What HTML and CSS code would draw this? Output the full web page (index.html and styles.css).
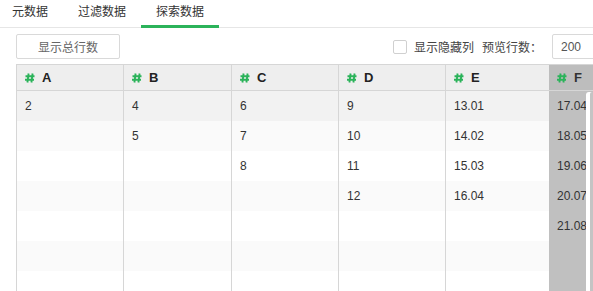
FILE: index.html
```html
<!DOCTYPE html>
<html lang="zh">
<head>
<meta charset="utf-8">
<link rel="stylesheet" href="styles.css">
</head>
<body>
<div class="app">
  <div class="tabs">
    <div class="tab first">元数据</div>
    <div class="tab">过滤数据</div>
    <div class="tab active">探索数据</div>
  </div>
  <div class="toolbar">
    <button class="btn">显示总行数</button>
    <div class="right">
      <label class="check"><span class="box"></span>显示隐藏列</label>
      <span class="label">预览行数：</span>
      <input class="num" value="200">
    </div>
  </div>
  <div class="table">
    <div class="row head">
      <div class="cell c1"><svg class="hash" viewBox="0 0 10 10"><path d="M3.6 0.5 L2.4 9.5 M7.6 0.5 L6.4 9.5 M0.5 3.3 H9.5 M0 6.8 H9" /></svg>A</div>
      <div class="cell c2"><svg class="hash" viewBox="0 0 10 10"><path d="M3.6 0.5 L2.4 9.5 M7.6 0.5 L6.4 9.5 M0.5 3.3 H9.5 M0 6.8 H9" /></svg>B</div>
      <div class="cell c3"><svg class="hash" viewBox="0 0 10 10"><path d="M3.6 0.5 L2.4 9.5 M7.6 0.5 L6.4 9.5 M0.5 3.3 H9.5 M0 6.8 H9" /></svg>C</div>
      <div class="cell c4"><svg class="hash" viewBox="0 0 10 10"><path d="M3.6 0.5 L2.4 9.5 M7.6 0.5 L6.4 9.5 M0.5 3.3 H9.5 M0 6.8 H9" /></svg>D</div>
      <div class="cell c5"><svg class="hash" viewBox="0 0 10 10"><path d="M3.6 0.5 L2.4 9.5 M7.6 0.5 L6.4 9.5 M0.5 3.3 H9.5 M0 6.8 H9" /></svg>E</div>
      <div class="cell c6 sel"><svg class="hash" viewBox="0 0 10 10"><path d="M3.6 0.5 L2.4 9.5 M7.6 0.5 L6.4 9.5 M0.5 3.3 H9.5 M0 6.8 H9" /></svg>F</div>
    </div>
    <div class="row hover">
      <div class="cell c1">2</div><div class="cell c2">4</div><div class="cell c3">6</div><div class="cell c4">9</div><div class="cell c5">13.01</div><div class="cell c6 sel">17.04</div>
    </div>
    <div class="row even">
      <div class="cell c1"></div><div class="cell c2">5</div><div class="cell c3">7</div><div class="cell c4">10</div><div class="cell c5">14.02</div><div class="cell c6 sel">18.05</div>
    </div>
    <div class="row">
      <div class="cell c1"></div><div class="cell c2"></div><div class="cell c3">8</div><div class="cell c4">11</div><div class="cell c5">15.03</div><div class="cell c6 sel">19.06</div>
    </div>
    <div class="row even">
      <div class="cell c1"></div><div class="cell c2"></div><div class="cell c3"></div><div class="cell c4">12</div><div class="cell c5">16.04</div><div class="cell c6 sel">20.07</div>
    </div>
    <div class="row">
      <div class="cell c1"></div><div class="cell c2"></div><div class="cell c3"></div><div class="cell c4"></div><div class="cell c5"></div><div class="cell c6 sel">21.08</div>
    </div>
    <div class="row even">
      <div class="cell c1"></div><div class="cell c2"></div><div class="cell c3"></div><div class="cell c4"></div><div class="cell c5"></div><div class="cell c6 sel"></div>
    </div>
    <div class="row last">
      <div class="cell c1"></div><div class="cell c2"></div><div class="cell c3"></div><div class="cell c4"></div><div class="cell c5"></div><div class="cell c6 sel"></div>
    </div>
  </div>
  <div class="scroll"><div class="thumb"></div></div>
</div>
</body>
</html>
```
FILE: styles.css
```css
html, body {
  margin: 0;
  padding: 0;
  overflow: hidden;
  background: #fff;
}
body {
  width: 593px;
  height: 291px;
  font-family: "Liberation Sans", "Noto Sans CJK SC", sans-serif;
  font-size: 12px;
  color: #333;
}
.app {
  position: relative;
  width: 593px;
  height: 291px;
  overflow: hidden;
}
.tabs {
  display: flex;
  height: 27px;
  border-bottom: 1px solid #e6e6e6;
}
.tab {
  position: relative;
  padding: 0 15px;
  line-height: 24px;
  height: 27px;
  color: #333;
}
.tab.first {
  padding-left: 12px;
}
.tab.active::after {
  content: "";
  position: absolute;
  left: 0;
  right: 0;
  bottom: -1px;
  height: 3px;
  background: #2bb35a;
}
.toolbar {
  box-sizing: border-box;
  width: 648px;
  display: flex;
  align-items: center;
  margin-top: 6px;
  padding: 0 16px;
  height: 25px;
}
.btn {
  width: 104px;
  height: 25px;
  margin: 0;
  padding: 0;
  border: 1px solid #d9d9d9;
  border-radius: 2px;
  background: #fff;
  color: #666;
  font-family: inherit;
  font-size: 12px;
}
.right {
  margin-left: auto;
  display: flex;
  align-items: center;
}
.check {
  display: flex;
  align-items: center;
  color: #444;
}
.box {
  width: 12px;
  height: 12px;
  border: 1px solid #d0d0d0;
  border-radius: 2px;
  margin-right: 7px;
  background: #fff;
}
.label {
  margin-left: 8px;
  margin-right: 10px;
  color: #444;
}
.num {
  box-sizing: border-box;
  width: 80px;
  height: 25px;
  margin: 0;
  padding: 0 8px;
  border: 1px solid #d9d9d9;
  border-radius: 2px;
  font-family: inherit;
  font-size: 12px;
  color: #555;
}
.table {
  margin-top: 5px;
  margin-left: 16px;
  width: 632px;
}
.row {
  display: flex;
  height: 30px;
  background: #fff;
}
.row.last {
  height: 20px;
}
.row.even {
  background: #fafafa;
}
.row.hover {
  background: #f2f2f2;
}
.row.head {
  box-sizing: border-box;
  height: 27px;
  border-top: 1px solid #d6d6d6;
  border-bottom: 1px solid #d6d6d6;
  background: #eeeeee;
  font-weight: bold;
  font-size: 13px;
  color: #222;
}
.cell {
  box-sizing: border-box;
  flex: none;
  display: flex;
  align-items: center;
  padding-left: 8px;
  border-left: 1px solid #d6d6d6;
  white-space: nowrap;
  overflow: hidden;
}
.row.last .cell {
  align-items: flex-start;
}
.c1 { width: 107px; }
.c2 { width: 108px; }
.c3 { width: 107px; }
.c4 { width: 107px; }
.c5 { width: 104px; }
.c6 { width: 99px; border-left: none; }
.cell.sel {
  background: #c0c0c0;
  color: #333;
  padding-left: 8px;
}
.head .cell.sel {
  background: #bdbdbd;
}
.hash {
  width: 10px;
  height: 10px;
  margin-right: 7px;
  flex: none;
}
.hash path {
  fill: none;
  stroke: #2bb35a;
  stroke-width: 1.9;
}
.scroll {
  position: absolute;
  left: 586px;
  top: 92px;
  width: 7px;
  height: 199px;
  background: #fff;
  border-top-left-radius: 3px;
  overflow: hidden;
}
.thumb {
  position: absolute;
  left: 4px;
  top: 0;
  width: 3px;
  height: 199px;
  background: #c4c4c4;
  border-top-left-radius: 2px;
}
```
